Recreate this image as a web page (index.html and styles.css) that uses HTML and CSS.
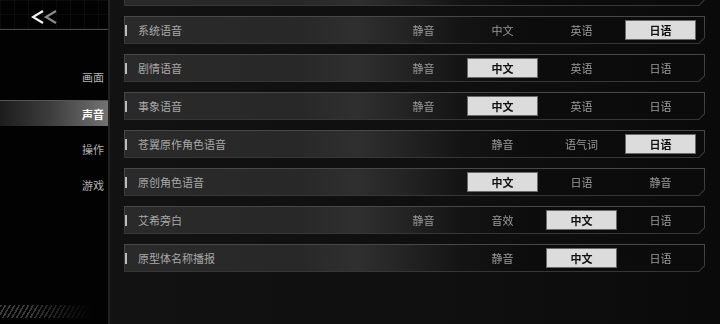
FILE: index.html
```html
<!DOCTYPE html>
<html lang="zh-CN">
<head>
    <meta charset="UTF-8">
    <meta name="viewport" content="width=device-width, initial-scale=1.0">
    <title>声音设置</title>
    <link rel="stylesheet" href="styles.css">
</head>
<body>

<div class="screen">
    <aside class="sidebar">
        <div class="sidebar-head">
            <svg class="back" width="28" height="14" viewBox="0 0 28 14">
                <polyline points="12,1 2,7 12,13" fill="none" stroke="#f2f2f2" stroke-width="2.2"/>
                <polyline points="25,1 15,7 25,13" fill="none" stroke="#8a8a8a" stroke-width="2.2"/>
            </svg>
        </div>
        <nav class="nav">
            <a class="nav-item" href="">画面</a>
            <a class="nav-item active" href="">声音</a>
            <a class="nav-item" href="">操作</a>
            <a class="nav-item" href="">游戏</a>
        </nav>
        <div class="stripes"></div>
    </aside>

    <main class="settings">
        <!-- row scrolled out above -->
        <div class="row row-top"><div class="row-in"></div></div>

        <div class="row"><div class="row-in">
            <span class="row-label">系统语音</span>
            <div class="opts">
                <span class="opt">静音</span>
                <span class="opt">中文</span>
                <span class="opt">英语</span>
                <span class="opt on">日语</span>
            </div>
        </div></div>

        <div class="row"><div class="row-in">
            <span class="row-label">剧情语音</span>
            <div class="opts">
                <span class="opt">静音</span>
                <span class="opt on">中文</span>
                <span class="opt">英语</span>
                <span class="opt">日语</span>
            </div>
        </div></div>

        <div class="row"><div class="row-in">
            <span class="row-label">事象语音</span>
            <div class="opts">
                <span class="opt">静音</span>
                <span class="opt on">中文</span>
                <span class="opt">英语</span>
                <span class="opt">日语</span>
            </div>
        </div></div>

        <div class="row"><div class="row-in">
            <span class="row-label">苍翼原作角色语音</span>
            <div class="opts">
                <span class="opt"></span>
                <span class="opt">静音</span>
                <span class="opt">语气词</span>
                <span class="opt on">日语</span>
            </div>
        </div></div>

        <div class="row"><div class="row-in">
            <span class="row-label">原创角色语音</span>
            <div class="opts">
                <span class="opt"></span>
                <span class="opt on">中文</span>
                <span class="opt">日语</span>
                <span class="opt">静音</span>
            </div>
        </div></div>

        <div class="row"><div class="row-in">
            <span class="row-label">艾希旁白</span>
            <div class="opts">
                <span class="opt">静音</span>
                <span class="opt">音效</span>
                <span class="opt on">中文</span>
                <span class="opt">日语</span>
            </div>
        </div></div>

        <div class="row"><div class="row-in">
            <span class="row-label">原型体名称播报</span>
            <div class="opts">
                <span class="opt"></span>
                <span class="opt">静音</span>
                <span class="opt on">中文</span>
                <span class="opt">日语</span>
            </div>
        </div></div>
    </main>
</div>

</body>
</html>
```

FILE: styles.css
```css
* {
    box-sizing: border-box;
}

body {
    margin: 0;
    padding: 0;
    background-color: #000;
    font-family: "Noto Sans CJK SC", "Noto Sans", sans-serif;
    font-size: 11px;
}

.screen {
    display: flex;
    width: 720px;
    height: 324px;
    overflow: hidden;
}

/* left menu */
.sidebar {
    width: 110px;
    flex-shrink: 0;
    display: flex;
    flex-direction: column;
    background-color: #020202;
    border-right: 2px solid #222;
}

.sidebar-head {
    height: 30px;
    padding: 10px 0 0 31px;
    border-bottom: 1px solid #4a4a4a;
    background-image:
        linear-gradient(90deg, rgba(255,255,255,0.035) 1px, transparent 1px),
        linear-gradient(rgba(255,255,255,0.035) 1px, transparent 1px);
    background-size: 14px 14px;
}

.back {
    display: block;
}

.nav {
    display: flex;
    flex-direction: column;
    gap: 10px;
    margin-top: 34px;
}

.nav-item {
    height: 26px;
    line-height: 26px;
    padding-right: 4px;
    text-align: right;
    color: #b4b4b4;
    text-decoration: none;
}

.nav-item.active {
    color: #fff;
    font-weight: bold;
    background: linear-gradient(90deg, #1c1c1c 0%, #3c3c3c 45%, #727272 100%);
    border-top: 1px solid #555;
}

.stripes {
    margin-top: auto;
    margin-bottom: 6px;
    width: 92px;
    height: 13px;
    background:
        linear-gradient(90deg, rgba(2,2,2,0) 30%, #020202 100%),
        repeating-linear-gradient(120deg, #3a3a3a 0 1.6px, transparent 1.6px 4px);
}

/* settings list */
.settings {
    flex: 1;
    padding: 0 15px 0 14px;
    background: linear-gradient(90deg, #121212 0%, #0f0f0f 60%, #0a0a0a 100%);
    overflow: hidden;
}

.row {
    height: 28px;
    margin-top: 10px;
    padding: 1px;
    background: linear-gradient(#484848, #363636);
    clip-path: polygon(0 0, 100% 0, 100% calc(100% - 6px), calc(100% - 6px) 100%, 0 100%);
}

.row-top {
    margin-top: -22px;
}

.row-in {
    height: 100%;
    display: flex;
    align-items: center;
    padding-right: 8px;
    background: linear-gradient(90deg, #2a2a2a 0%, #282828 30%, #2f2f2f 40%, #242424 48%, #141414 58%, #0c0c0c 70%, #0b0b0b 100%);
    clip-path: polygon(0 0, 100% 0, 100% calc(100% - 5.5px), calc(100% - 5.5px) 100%, 0 100%);
}

.row-in::before {
    content: "";
    width: 2px;
    height: 11px;
    margin-right: 11px;
    background-color: #bdbdbd;
    flex-shrink: 0;
}

.row-label {
    flex: 1;
    color: #a8a8a8;
}

.opts {
    display: grid;
    grid-template-columns: repeat(4, 71px);
    column-gap: 8px;
    will-change: transform;
}

.opt {
    height: 20px;
    line-height: 18px;
    text-align: center;
    color: #9a9a9a;
    border: 1px solid transparent;
}

.opt.on {
    color: #111;
    font-weight: bold;
    background-color: #dcdcdc;
    border-color: #6a6a6a;
}
```
